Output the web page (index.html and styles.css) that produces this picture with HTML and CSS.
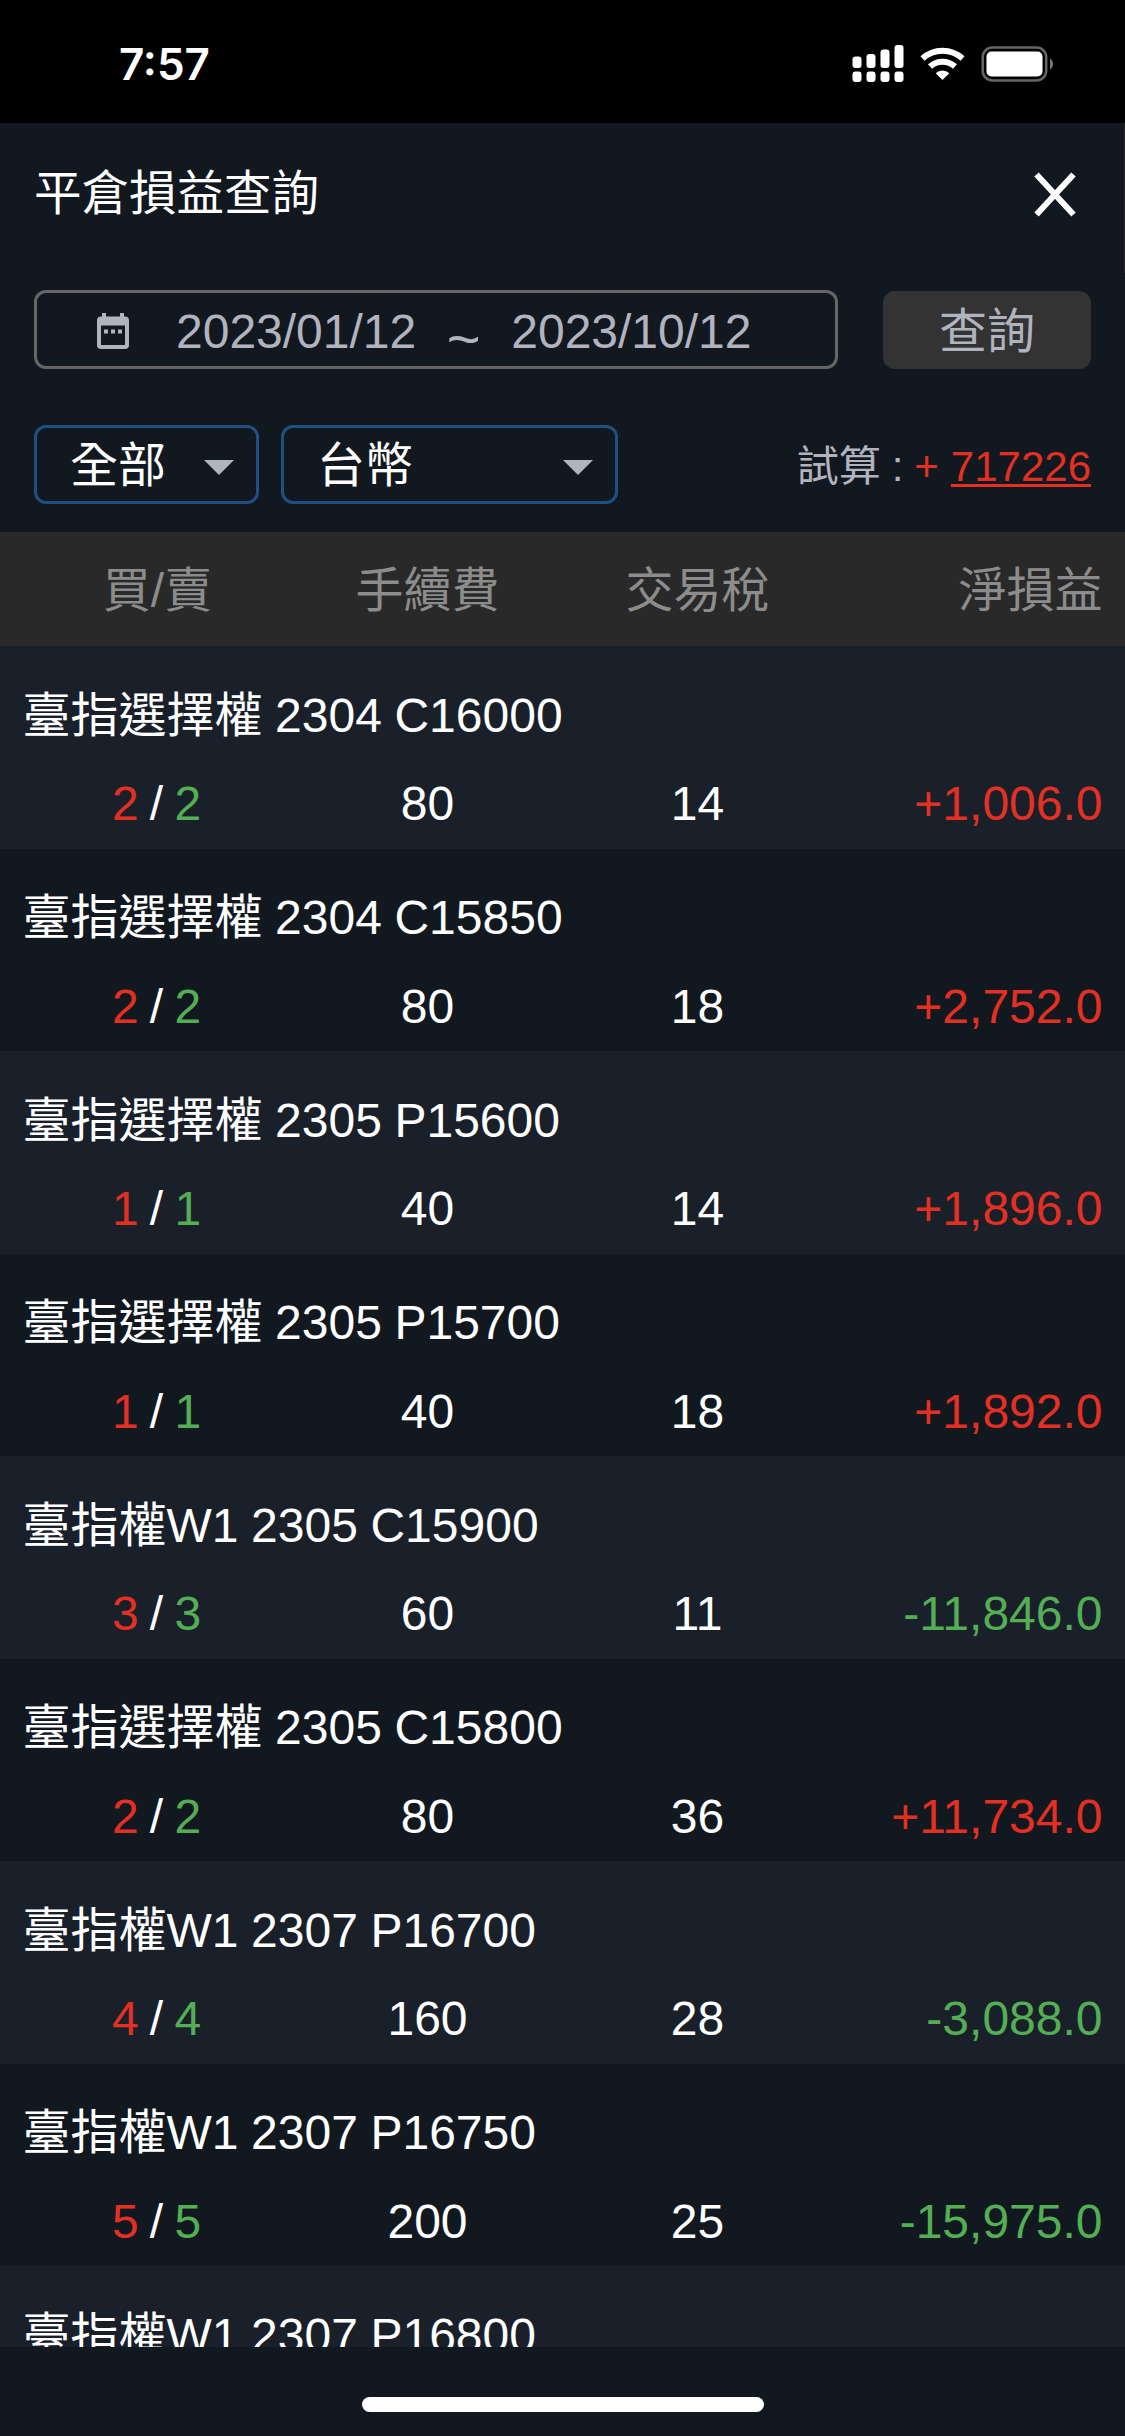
FILE: index.html
```html
<!DOCTYPE html>
<html lang="zh-Hant">
<head>
<meta charset="utf-8">
<title>平倉損益查詢</title>
<link rel="stylesheet" href="styles.css">
</head>
<body>
<div class="screen">
  <div class="status">
    <span class="time">7:57</span>
    <svg class="status-icons" width="204" height="40" viewBox="0 0 204 40">
      <g fill="#fff">
        <rect x="0.5" y="12.5" width="9" height="11.5" rx="3"/><rect x="14.5" y="10" width="9" height="14" rx="3"/><rect x="28.5" y="5.5" width="9" height="18.5" rx="3"/><rect x="42.5" y="1" width="9" height="23" rx="3"/>
        <rect x="0.5" y="27.5" width="9" height="10.5" rx="3"/><rect x="14.5" y="27.5" width="9" height="10.5" rx="3"/><rect x="28.5" y="27.5" width="9" height="10.5" rx="3"/><rect x="42.5" y="27.5" width="9" height="10.5" rx="3"/>
        <path d="M90.5 36 83.7 29.2a10 10 0 0 1 13.6 0z"/>
        <rect x="134.500" y="7.500" width="56" height="25" rx="5"/>
      </g>
      <g fill="none" stroke="#fff" stroke-width="6">
        <path d="M70.5 14.500a29.500 29.500 0 0 1 40 0"/>
        <path d="M78 22.500a18.500 18.500 0 0 1 25 0"/>
      </g>
      <rect x="130.700" y="3.500" width="63.500" height="33" rx="9.500" fill="none" stroke="#666" stroke-width="2.500"/>
      <path d="M198 14.500c4 2.500 4 8.500 0 11z" fill="#777"/>
    </svg>
  </div>
  <header class="title-bar">
    <h1 class="title">平倉損益查詢</h1>
    <svg class="close" width="42" height="45" viewBox="0 0 42 45"><path d="M2.500 2.500 39.500 42.500M39.500 2.500 2.500 42.500" stroke="#fff" stroke-width="6"/></svg>
  </header>
  <div class="search">
    <div class="dates">
      <svg class="calendar" width="32" height="36" viewBox="0 0 32 36"><path fill="#b1b3be" fill-rule="evenodd" d="M5 0h4v3.500h14V0h4v3.500h1a4 4 0 0 1 4 4V32a4 4 0 0 1-4 4H4a4 4 0 0 1-4-4V7.500a4 4 0 0 1 4-4h1zM4 12.500V32h24V12.500z"/><path fill="#b1b3be" d="M7 16.500h4v4h-4zM14 16.500h4v4h-4zM21 16.500h4v4h-4z"/></svg>
      <span>2023/01/12</span><span class="tilde">~</span><span>2023/10/12</span>
    </div>
    <button class="query">查詢</button>
  </div>
  <div class="filters">
    <div class="select select-all"><span>全部</span><svg width="30" height="15" viewBox="0 0 30 15"><path fill="#b1b3be" d="M0 0h30L15 15z"/></svg></div>
    <div class="select select-currency"><span>台幣</span><svg width="30" height="15" viewBox="0 0 30 15"><path fill="#b1b3be" d="M0 0h30L15 15z"/></svg></div>
    <div class="total"><span>試算</span><span class="colon">:</span><span class="gain plus">+</span><span class="gain amount">717226</span></div>
  </div>
  <div class="grid head"><span>買/賣</span><span>手續費</span><span>交易稅</span><span class="net">淨損益</span></div>
  <main class="list">
    <section class="row"><div class="name">臺指選擇權 2304 C16000</div><div class="grid"><span class="lots"><b class="gain">2</b>/<b class="loss">2</b></span><span>80</span><span>14</span><span class="net gain">+1,006.0</span></div></section>
    <section class="row"><div class="name">臺指選擇權 2304 C15850</div><div class="grid"><span class="lots"><b class="gain">2</b>/<b class="loss">2</b></span><span>80</span><span>18</span><span class="net gain">+2,752.0</span></div></section>
    <section class="row"><div class="name">臺指選擇權 2305 P15600</div><div class="grid"><span class="lots"><b class="gain">1</b>/<b class="loss">1</b></span><span>40</span><span>14</span><span class="net gain">+1,896.0</span></div></section>
    <section class="row"><div class="name">臺指選擇權 2305 P15700</div><div class="grid"><span class="lots"><b class="gain">1</b>/<b class="loss">1</b></span><span>40</span><span>18</span><span class="net gain">+1,892.0</span></div></section>
    <section class="row"><div class="name">臺指權W1 2305 C15900</div><div class="grid"><span class="lots"><b class="gain">3</b>/<b class="loss">3</b></span><span>60</span><span>11</span><span class="net loss">-11,846.0</span></div></section>
    <section class="row"><div class="name">臺指選擇權 2305 C15800</div><div class="grid"><span class="lots"><b class="gain">2</b>/<b class="loss">2</b></span><span>80</span><span>36</span><span class="net gain">+11,734.0</span></div></section>
    <section class="row"><div class="name">臺指權W1 2307 P16700</div><div class="grid"><span class="lots"><b class="gain">4</b>/<b class="loss">4</b></span><span>160</span><span>28</span><span class="net loss">-3,088.0</span></div></section>
    <section class="row"><div class="name">臺指權W1 2307 P16750</div><div class="grid"><span class="lots"><b class="gain">5</b>/<b class="loss">5</b></span><span>200</span><span>25</span><span class="net loss">-15,975.0</span></div></section>
    <section class="row"><div class="name">臺指權W1 2307 P16800</div></section>
  </main>
  <footer class="home"><div class="home-bar"></div></footer>
</div>
</body>
</html>
```
FILE: styles.css
```css
* { box-sizing: border-box; }
body {
  margin: 0;
  background: #111820;
  color: #fff;
  font: 48px/66px "Liberation Sans", "Noto Sans CJK TC", sans-serif;
}
.screen {
  width: 1125px;
  height: 2436px;
  display: flex;
  flex-direction: column;
  overflow: hidden;
}
.status {
  height: 123px;
  background: #000;
  display: flex;
  justify-content: space-between;
  padding: 0 69px 0 119px;
}
.time {
  font: 600 44px/54px Inter, sans-serif;
  margin-top: 37px;
}
.status-icons { margin-top: 44px; }
.title-bar {
  height: 150px;
  display: flex;
  justify-content: space-between;
  align-items: flex-start;
  padding: 38px 48px 0 34px;
  border-right: 1px solid #292626;
}
.title { margin: 0; font-size: 47.5px; font-weight: 400; }
.close { margin-top: 11px; }
.search {
  display: flex;
  justify-content: space-between;
  align-items: flex-end;
  height: 79px;
  margin-top: 17px;
  padding: 0 34px;
  color: #b1b3be;
}
.dates {
  width: 804px;
  height: 79px;
  border: 3px solid #666;
  border-radius: 12px;
  display: flex;
  align-items: center;
  padding: 5px 0 0 60px;
}
.calendar { margin: -2px 47px 0 0; }
.tilde {
  width: 95px;
  padding-top: 14px;
  font-size: 58px;
  text-align: center;
}
.query {
  width: 208px;
  height: 78px;
  padding: 3px 0 0;
  border: 0;
  border-radius: 12px;
  background: #333;
  color: #b1b3be;
  font: inherit;
}
.filters {
  display: flex;
  align-items: center;
  height: 79px;
  margin: 56px 34px 28px;
}
.select {
  height: 79px;
  border: 3px solid #205081;
  border-radius: 12px;
  display: flex;
  align-items: center;
  justify-content: space-between;
  padding: 3px 22px 0 33px;
}
.select svg { margin-top: 2px; }
.select-all { width: 225px; margin-right: 22px; }
.select-currency { width: 337px; }
.total {
  display: flex;
  margin-left: auto;
  padding-top: 4px;
  font-size: 42px;
  color: #b1b3be;
}
.colon { margin-left: 11px; }
.plus { margin-left: 11px; }
.amount {
  margin-left: 12px;
  text-decoration: underline;
  text-decoration-thickness: 3px;
  text-underline-offset: 3px;
  text-decoration-skip-ink: none;
}
.grid {
  display: grid;
  grid-template-columns: repeat(4, 1fr);
  padding: 0 22.5px;
  text-align: center;
}
.head {
  height: 114px;
  line-height: 118px;
  background: #292929;
  color: #8c8c8c;
}
.grid .net { text-align: right; }
.list { height: 1701px; overflow: hidden; }
.row { height: 202.5px; padding-top: 36.5px; }
.row:nth-child(odd) { background: #1a202a; }
.name { padding-left: 22.5px; margin-bottom: 22.5px; word-spacing: -0.75px; }
.lots { display: flex; justify-content: center; gap: 11.25px; padding-right: 2px; }
.lots b { font-weight: 400; }
.gain { color: #e33022; }
.loss { color: #54ae53; }
.home {
  flex: 1;
  display: flex;
  justify-content: center;
  padding-top: 50px;
}
.home-bar {
  width: 402px;
  height: 15px;
  border-radius: 7.5px;
  background: #fff;
}
```
